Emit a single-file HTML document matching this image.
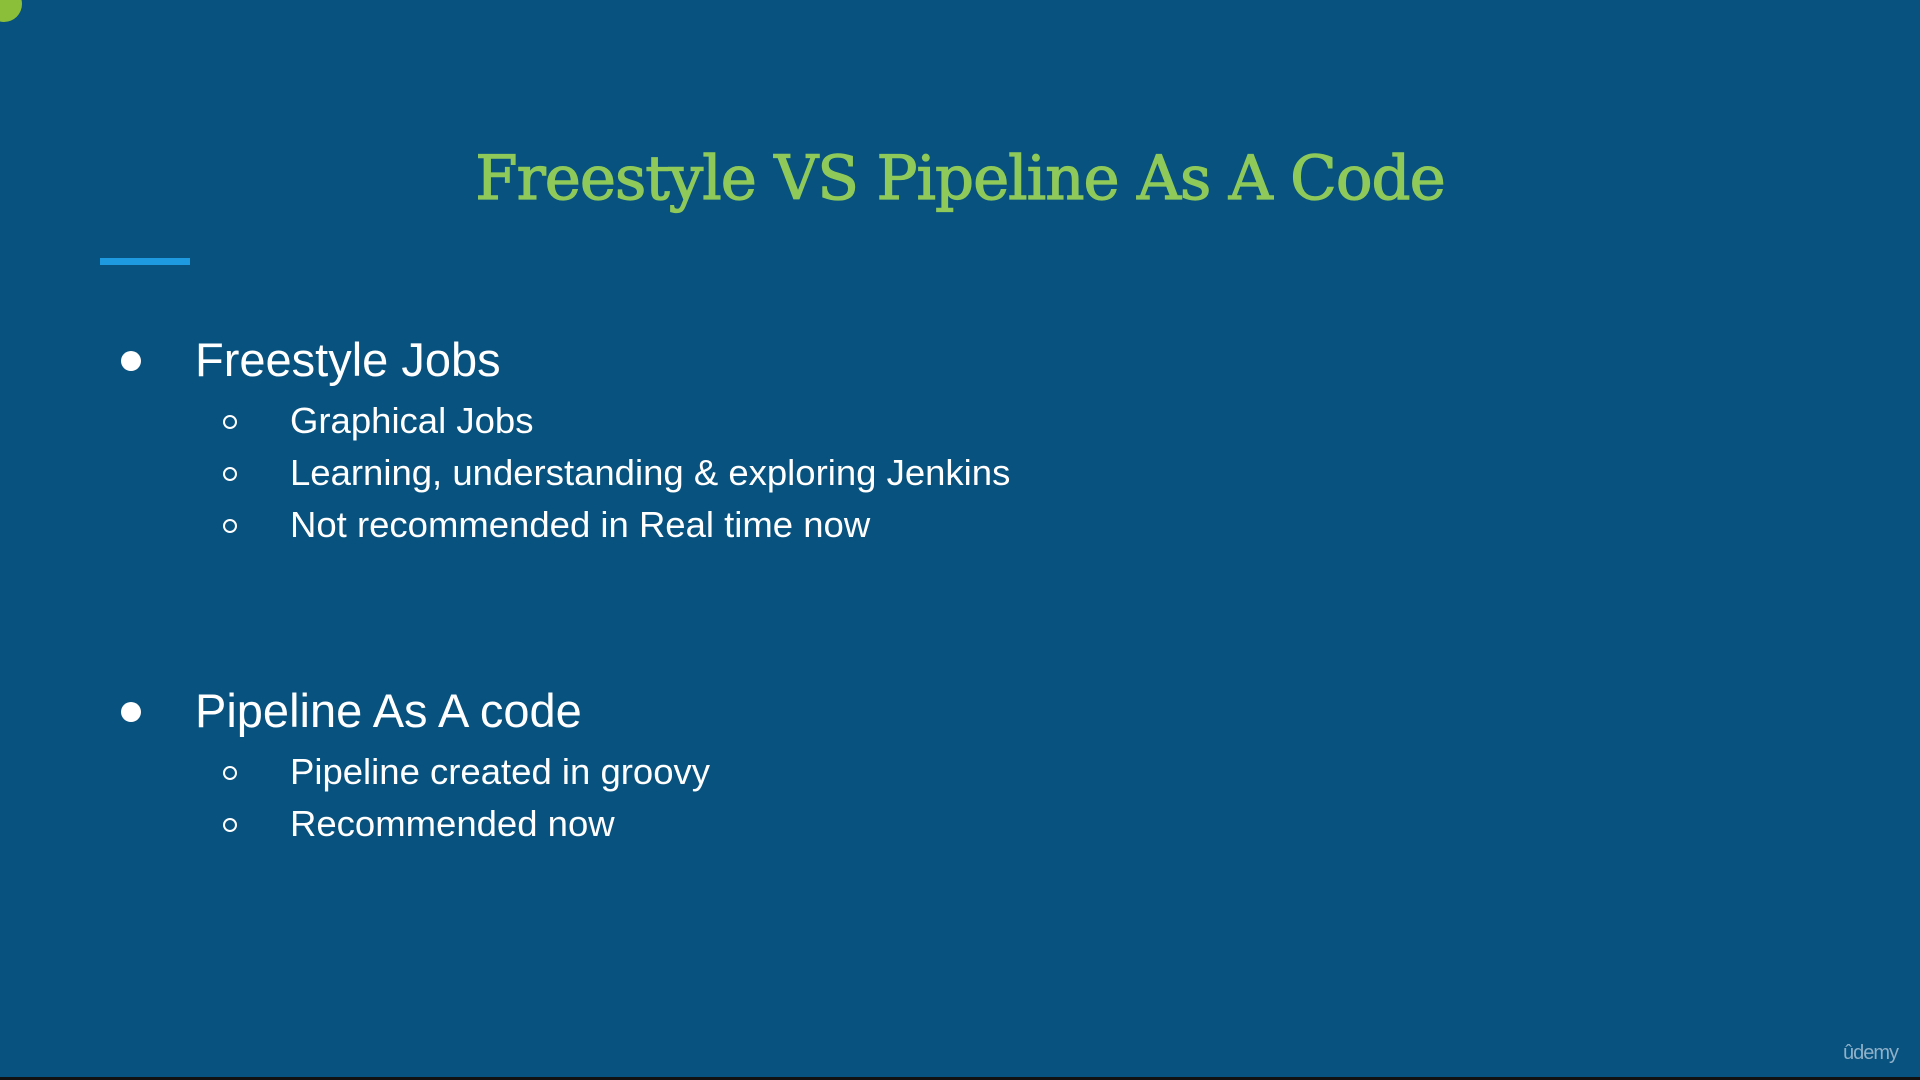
<!DOCTYPE html>
<html><head><meta charset="utf-8"><style>
html,body{margin:0;padding:0}
body{width:1920px;height:1080px;background:#07527f;position:relative;overflow:hidden;font-family:"Liberation Sans",sans-serif;color:#fff}
.t{position:absolute;white-space:nowrap;line-height:1}
.title{left:0;width:1920px;text-align:center;top:148px;font-family:"DejaVu Serif","Liberation Serif",serif;font-size:61px;color:#8fc95a;letter-spacing:-1px;-webkit-text-stroke:1.2px #8fc95a}
.line{position:absolute;left:100px;top:258px;width:90px;height:7px;background:#1e9be0}
.b{font-size:47px}
.s{font-size:36.5px}
.dot{position:absolute;width:20px;height:20px;border-radius:50%;background:#fff}
.circ{position:absolute;width:10px;height:10px;border-radius:50%;border:2.5px solid #fff}
.bar{position:absolute;left:0;top:1077px;width:1920px;height:3px;background:#111}
.ud{position:absolute;left:1843px;top:1043px;font-size:20px;color:#8fb0c8;letter-spacing:-1px}
.corner{position:absolute;left:-14px;top:-14px;width:36px;height:36px;border-radius:50%;background:#8bbf3a}
</style></head><body>
<div class="corner"></div>
<div class="t title">Freestyle VS Pipeline As A Code</div>
<div class="line"></div>

<div class="dot" style="left:121px;top:351px"></div>
<div class="t b" style="left:195px;top:336px">Freestyle Jobs</div>
<div class="circ" style="left:223px;top:415px"></div>
<div class="t s" style="left:290px;top:403px">Graphical Jobs</div>
<div class="circ" style="left:223px;top:467px"></div>
<div class="t s" style="left:290px;top:455px">Learning, understanding &amp; exploring Jenkins</div>
<div class="circ" style="left:223px;top:519px"></div>
<div class="t s" style="left:290px;top:507px">Not recommended in Real time now</div>

<div class="dot" style="left:121px;top:702px"></div>
<div class="t b" style="left:195px;top:687px">Pipeline As A code</div>
<div class="circ" style="left:223px;top:766px"></div>
<div class="t s" style="left:290px;top:754px">Pipeline created in groovy</div>
<div class="circ" style="left:223px;top:818px"></div>
<div class="t s" style="left:290px;top:806px">Recommended now</div>

<div class="t ud">ûdemy</div>
<div class="bar"></div>
</body></html>
